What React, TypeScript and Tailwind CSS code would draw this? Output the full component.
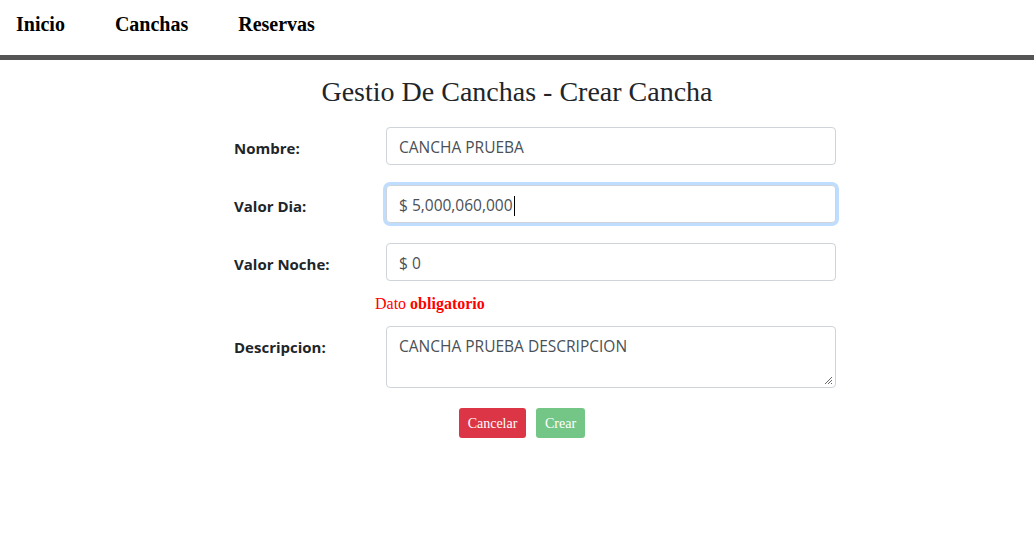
import React from 'react'

const serif = { fontFamily: '"Liberation Serif", "Times New Roman", serif' }
const sans = { fontFamily: '"Open Sans", "Noto Sans", sans-serif' }

function Field({ label, children }: { label: string; children: React.ReactNode }) {
    return (
        <div className="flex items-start">
            <label className="w-[152px] shrink-0 pt-[9px] leading-6 text-[15px] font-bold text-[#212529]">{label}</label>
            {children}
        </div>
    )
}

const inputCls =
    'w-[450px] h-[38px] px-3 pt-[3px] flex items-center border border-[#ced4da] rounded-[4px] text-[15.5px] text-[#495057] bg-white'

export default function App() {
    return (
        <div className="min-h-screen bg-white">
            {/* top nav */}
            <nav className="h-[60px] border-b-[5px] border-[#555555] flex items-start pt-[12px] pl-4 gap-[50px]" style={serif}>
                <a className="text-[20px] font-bold text-black leading-6">Inicio</a>
                <a className="text-[20px] font-bold text-black leading-6">Canchas</a>
                <a className="text-[20px] font-bold text-black leading-6">Reservas</a>
            </nav>

            <h1 className="text-center text-[28px] text-[#212529] mt-[16px] leading-8" style={serif}>
                Gestio De Canchas - Crear Cancha
            </h1>

            <form className="ml-[234px] mt-[19px] flex flex-col" style={sans}>
                <Field label="Nombre:">
                    <div className={inputCls}>CANCHA PRUEBA</div>
                </Field>

                <div className="mt-[20px]">
                    <Field label="Valor Dia:">
                        <div className={`${inputCls} border-[#80bdff] shadow-[0_0_0_3px_rgba(0,123,255,0.25)]`}>
                            <span>$ 5,000,060,000</span>
                            <span className="inline-block w-px h-[20px] bg-black ml-px" />
                        </div>
                    </Field>
                </div>

                <div className="mt-[20px]">
                    <Field label="Valor Noche:">
                        <div className={inputCls}>$ 0</div>
                    </Field>
                </div>

                <p className="ml-[141px] mt-[11px] text-[16px] text-[#ff0000] leading-6" style={serif}>
                    Dato <b>obligatorio</b>
                </p>

                <div className="mt-[10px]">
                    <Field label="Descripcion:">
                        <div className="relative w-[450px] h-[62px] px-3 pt-[7px] border border-[#ced4da] rounded-[4px] text-[15.5px] text-[#495057] leading-6">
                            CANCHA PRUEBA DESCRIPCION
                            <svg className="absolute right-[2px] bottom-[2px]" width="9" height="9" viewBox="0 0 9 9">
                                <path d="M8 1L1 8M8 4L4 8M8 7L7 8" stroke="#666" strokeWidth="1" />
                            </svg>
                        </div>
                    </Field>
                </div>

                <div className="ml-[225px] mt-[20px] flex gap-[10px]" style={serif}>
                    <button type="button" className="w-[67px] h-[30px] rounded-[3px] bg-[#dc3545] text-white text-[14px]">
                        Cancelar
                    </button>
                    <button type="button" className="w-[49px] h-[30px] rounded-[3px] bg-[#74c687] text-white text-[14px]">
                        Crear
                    </button>
                </div>
            </form>
        </div>
    )
}
